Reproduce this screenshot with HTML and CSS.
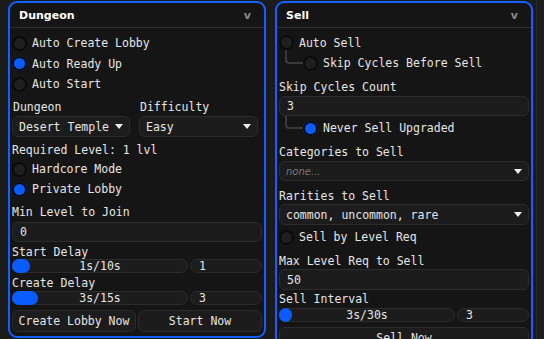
FILE: index.html
```html
<!DOCTYPE html>
<html>
<head>
<meta charset="utf-8">
<link rel="stylesheet" href="styles.css">
</head>
<body>
<div class="panel">
  <div class="head"><span class="title">Dungeon</span><span class="chev">v</span></div>
  <div class="body">
    <div class="row"><span class="radio"></span>Auto Create Lobby</div>
    <div class="row"><span class="radio on"></span>Auto Ready Up</div>
    <div class="row"><span class="radio"></span>Auto Start</div>
    <div class="two m55">
      <div class="col">
        <div class="label">Dungeon</div>
        <div class="frame combo h21 m2">Desert Temple<i class="arrow"></i></div>
      </div>
      <div class="col">
        <div class="label">Difficulty</div>
        <div class="frame combo h21 m2">Easy<i class="arrow"></i></div>
      </div>
    </div>
    <div class="label m6">Required Level: 1 lvl</div>
    <div class="row row20 m2"><span class="radio"></span>Hardcore Mode</div>
    <div class="row row20"><span class="radio on"></span>Private Lobby</div>
    <div class="label m6">Min Level to Join</div>
    <div class="frame input h20 m3">0</div>
    <div class="label m3">Start Delay</div>
    <div class="srow">
      <div class="frame slider"><span class="knob" style="width:18px"></span>1s/10s</div>
      <div class="frame val">1</div>
    </div>
    <div class="label m3">Create Delay</div>
    <div class="srow m1">
      <div class="frame slider"><span class="knob" style="width:26px"></span>3s/15s</div>
      <div class="frame val">3</div>
    </div>
    <div class="btns m5">
      <div class="frame btn">Create Lobby Now</div>
      <div class="frame btn">Start Now</div>
    </div>
  </div>
</div>
<div class="panel right">
  <div class="head"><span class="title">Sell</span><span class="chev">v</span></div>
  <div class="body">
    <div class="row"><span class="radio"></span>Auto Sell</div>
    <div class="row child c1"><span class="radio"></span>Skip Cycles Before Sell</div>
    <div class="label m65">Skip Cycles Count</div>
    <div class="frame input h20 m2">3</div>
    <div class="row row20 child c2 m2"><span class="radio on"></span>Never Sell Upgraded</div>
    <div class="label m7">Categories to Sell</div>
    <div class="frame combo h20 m2"><span class="hint">none...</span><i class="arrow"></i></div>
    <div class="label m8">Rarities to Sell</div>
    <div class="frame combo h21 m1">common, uncommon, rare<i class="arrow"></i></div>
    <div class="row row20 m2"><span class="radio"></span>Sell by Level Req</div>
    <div class="label m7">Max Level Req to Sell</div>
    <div class="frame input h21 m1">50</div>
    <div class="label m2">Sell Interval</div>
    <div class="srow m2">
      <div class="frame slider"><span class="knob" style="width:13px"></span>3s/30s</div>
      <div class="frame val">3</div>
    </div>
    <div class="frame btn full m5">Sell Now</div>
  </div>
</div>
<div class="scroll"></div>
</body>
</html>
```
FILE: styles.css
```css
html, body { margin: 0; }
body {
  background: #1b1b1b;
  font-family: "DejaVu Sans Mono", monospace;
  font-size: 11.5px;
  color: #e6e6e6;
  display: flex;
  align-items: flex-start;
  padding: 1px 0 0 8px;
  height: 339px;
  box-sizing: border-box;
  overflow: hidden;
}
.panel {
  flex: none;
  width: 258px;
  box-sizing: border-box;
  border: 2px solid #1160ff;
  border-radius: 9px;
  background: #151515;
}
.panel.right { margin-left: 9px; }
.scroll {
  flex: none;
  margin: -1px 0 0 3px;
  width: 8px;
  height: 339px;
  border-left: 1px solid #2b2b2b;
  background: #1d1d1d;
}
.head {
  height: 24px;
  display: flex;
  align-items: center;
  justify-content: space-between;
  padding: 0 13px 0 9px;
  border-bottom: 1px solid #2f2f2f;
  font-family: "DejaVu Sans", sans-serif;
  font-weight: bold;
  font-size: 11px;
  color: #ffffff;
}
.chev { color: #8a8a8a; }
.body { padding: 5px 2px 4px; }
.right .body { padding-top: 4.5px; }

.row {
  height: 20.5px;
  display: flex;
  align-items: center;
  gap: 5px;
  white-space: nowrap;
}
.row20 { height: 20px; }
.radio {
  flex: none;
  width: 15px;
  height: 15px;
  border-radius: 50%;
  background: #1f1f1f;
  box-shadow: inset 0 0 0 2px #0a0a0a;
}
.radio.on { background: #0b5cff; }

.child { position: relative; padding-left: 24px; }
.child::before {
  content: "";
  position: absolute;
  left: 6px;
  width: 18px;
  box-sizing: border-box;
  border-left: 2px solid #3a3a3a;
  border-bottom: 2px solid #3a3a3a;
  border-bottom-left-radius: 4px;
}
.c1::before { top: -3px; height: 14px; }
.c2::before { top: -2px; height: 13px; }

.label { height: 14px; line-height: 14px; white-space: nowrap; }

.frame {
  box-sizing: border-box;
  background: #1c1c1c;
  border: 1px solid #2c2c2c;
  border-radius: 6px;
  display: flex;
  align-items: center;
  white-space: nowrap;
}
.h20 { height: 20px; }
.h21 { height: 21px; }
.combo { padding: 0 6px 0 6px; }
.input { padding: 0 7px; }
.arrow {
  margin-left: auto;
  width: 0;
  height: 0;
  border-left: 4.5px solid transparent;
  border-right: 4.5px solid transparent;
  border-top: 5px solid #eeeeee;
}
.hint {
  font-family: "DejaVu Sans", sans-serif;
  font-style: italic;
  font-size: 10px;
  color: #777777;
}

.two {
  display: grid;
  grid-template-columns: 118px 119px;
  column-gap: 9px;
}
.two .label { padding-left: 1px; }

.srow { display: flex; gap: 2px; height: 14px; }
.slider {
  flex: 0 0 176px;
  position: relative;
  justify-content: center;
  border-radius: 7px;
}
.knob {
  position: absolute;
  left: -1px;
  top: -1px;
  bottom: -1px;
  border-radius: 7px;
  background: #0b5cff;
}
.val { flex: 1; padding-left: 8px; border-radius: 7px; }

.btns {
  display: grid;
  grid-template-columns: 1fr 1fr;
  gap: 2px;
}
.btn { height: 22px; justify-content: center; }

.m1 { margin-top: 1px; }
.m2 { margin-top: 2px; }
.m3 { margin-top: 3px; }
.m5 { margin-top: 5px; }
.m55 { margin-top: 5.5px; }
.m6 { margin-top: 6px; }
.m65 { margin-top: 6.5px; }
.m7 { margin-top: 7px; }
.m8 { margin-top: 8px; }
```
